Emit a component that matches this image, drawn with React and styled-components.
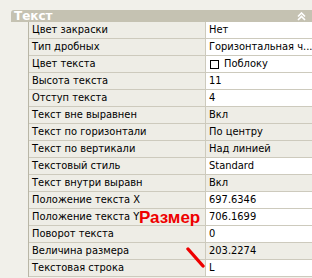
import React from 'react';
import styled, { createGlobalStyle } from 'styled-components';

const GlobalStyle = createGlobalStyle`
  html, body {
    margin: 0;
    padding: 0;
    background: #f1f0ea;
  }
  body {
    font-family: "DejaVu Sans Condensed", "DejaVu Sans", Tahoma, sans-serif;
    font-size: 11px;
    color: #000;
  }
`;

const rows = [
  { label: 'Цвет закраски', value: 'Нет', edit: true },
  { label: 'Тип дробных', value: 'Горизонтальная ч...', edit: true },
  { label: 'Цвет текста', value: 'Поблоку', edit: true, check: true },
  { label: 'Высота текста', value: '11', edit: true },
  { label: 'Отступ текста', value: '4', edit: true },
  { label: 'Текст вне выравнен', value: 'Вкл' },
  { label: 'Текст по горизонтали', value: 'По центру' },
  { label: 'Текст по вертикали', value: 'Над линией' },
  { label: 'Текстовый стиль', value: 'Standard', edit: true },
  { label: 'Текст внутри выравн', value: 'Вкл' },
  { label: 'Положение текста X', value: '697.6346', edit: true },
  { label: 'Положение текста Y', value: '706.1699', edit: true },
  { label: 'Поворот текста', value: '0', edit: true },
  { label: 'Величина размера', value: '203.2274' },
  { label: 'Текстовая строка', value: 'L', edit: true },
];

const App = () => {
  return (
    <>
      <GlobalStyle />
      <Palette>
        <Header>
          <HeaderTitle>Текст</HeaderTitle>
          <Collapse viewBox="0 0 9 9" width="9" height="9">
            <path d="M1 4.5 L4.5 1 L8 4.5 M1 8 L4.5 4.5 L8 8" fill="none" stroke="#fff" strokeWidth="1.6" />
          </Collapse>
        </Header>
        <Grid>
          {rows.map((r) => (
            <Row key={r.label}>
              <Label>{r.label}</Label>
              <Value $edit={r.edit}>
                {r.check && <Check />}
                {r.value}
              </Value>
            </Row>
          ))}
        </Grid>
        <Note>Размер</Note>
        <Pointer viewBox="0 0 20 22" width="20" height="22">
          <line x1="2" y1="2" x2="17" y2="19" stroke="#ee0000" strokeWidth="3.4" strokeLinecap="round" />
        </Pointer>
      </Palette>
    </>
  );
};

const Palette = styled.div`
  position: relative;
  width: 312px;
  height: 278px;
  overflow: hidden;
  padding-top: 10px;
  box-sizing: border-box;
`;

const Header = styled.div`
  margin-left: 11px;
  height: 12px;
  padding: 0 6px 0 3px;
  background: #c5c2b2;
  border-top-left-radius: 3px;
  display: flex;
  align-items: center;
  justify-content: space-between;
`;

const HeaderTitle = styled.span`
  color: #fff;
  font-family: "DejaVu Sans", Tahoma, sans-serif;
  font-weight: bold;
  font-size: 12px;
  line-height: 12px;
`;

const Collapse = styled.svg`
  display: block;
`;

const Grid = styled.div`
  margin-left: 28px;
  border-left: 1px solid #b9b6a6;
`;

const Row = styled.div`
  display: grid;
  grid-template-columns: 177px 1fr;
  height: 17px;
  box-sizing: border-box;
  border-bottom: 1px solid #cdcabd;
`;

const Label = styled.div`
  background: #eeede6;
  padding-left: 3px;
  line-height: 16px;
  white-space: nowrap;
  overflow: hidden;
  border-right: 1px solid #cdcabd;
`;

const Value = styled.div`
  background: ${(p) => (p.$edit ? '#fff' : '#eeede6')};
  padding-left: 3px;
  line-height: 16px;
  white-space: nowrap;
  overflow: hidden;
  display: flex;
  align-items: center;
`;

const Check = styled.span`
  width: 9px;
  height: 9px;
  border: 1px solid #000;
  margin: 0 5px 0 1px;
  box-sizing: border-box;
`;

const Note = styled.div`
  position: absolute;
  left: 139px;
  top: 208px;
  color: #ee0000;
  font-family: "Liberation Sans", Arial, sans-serif;
  font-weight: bold;
  font-size: 17px;
  line-height: 19px;
`;

const Pointer = styled.svg`
  position: absolute;
  left: 186px;
  top: 247px;
`;

export default App;
